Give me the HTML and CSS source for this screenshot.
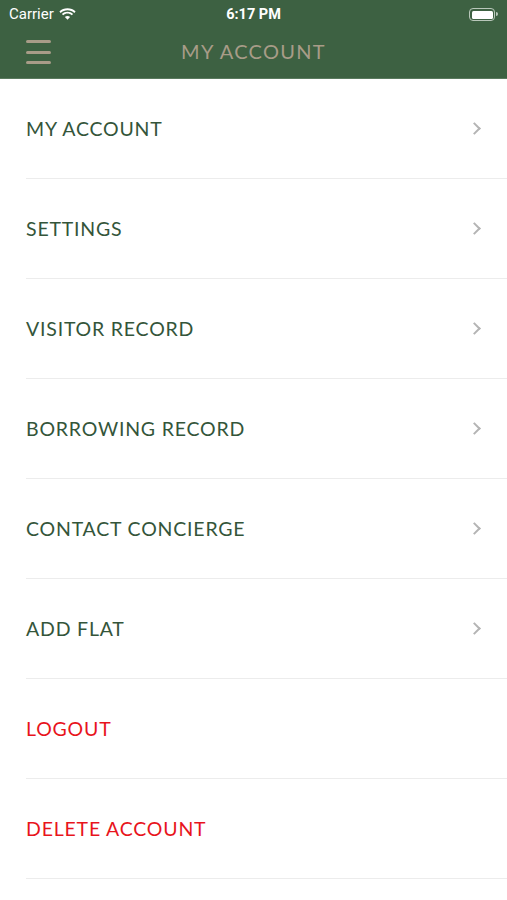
FILE: index.html
```html
<!DOCTYPE html>
<html lang="en">

<head>
    <meta charset="UTF-8">
    <meta name="viewport" content="width=device-width, initial-scale=1.0">
    <title>My Account</title>
    <link rel="stylesheet" href="styles.css">
</head>

<body>
    <header class="top">
        <div class="status">
            <div class="carrier">
                Carrier
                <svg class="wifi" width="17" height="12" viewBox="0 0 17 12">
                    <path d="M8.5 2.2c2.6 0 5 1 6.8 2.7l1.3-1.4C14.5 1.5 11.6.3 8.5.3S2.5 1.5.4 3.5l1.3 1.4C3.5 3.2 5.9 2.2 8.5 2.2z" fill="#fff" />
                    <path d="M8.5 5.6c1.6 0 3.1.6 4.3 1.7l1.3-1.4C12.6 4.5 10.6 3.7 8.5 3.7S4.4 4.5 2.9 5.9l1.3 1.4C5.4 6.2 6.9 5.6 8.5 5.6z" fill="#fff" />
                    <path d="M8.5 11.7l2.6-2.8C10.4 8.3 9.5 7.9 8.5 7.9S6.6 8.3 5.9 8.9z" fill="#fff" />
                </svg>
            </div>
            <div class="time">6:17 PM</div>
            <div class="battery">
                <span class="cell"></span>
                <span class="tip"></span>
            </div>
        </div>
        <div class="navbar">
            <button class="menu" aria-label="Menu">
                <span></span><span></span><span></span>
            </button>
            <h1>MY ACCOUNT</h1>
        </div>
    </header>

    <ul class="list">
        <li><span>MY ACCOUNT</span><i class="chev"></i></li>
        <li><span>SETTINGS</span><i class="chev"></i></li>
        <li><span>VISITOR RECORD</span><i class="chev"></i></li>
        <li><span>BORROWING RECORD</span><i class="chev"></i></li>
        <li><span>CONTACT CONCIERGE</span><i class="chev"></i></li>
        <li><span>ADD FLAT</span><i class="chev"></i></li>
        <li class="danger"><span>LOGOUT</span></li>
        <li class="danger"><span>DELETE ACCOUNT</span></li>
    </ul>
</body>

</html>
```

FILE: styles.css
```css
* {
    margin: 0;
    padding: 0;
    box-sizing: border-box;
}

body {
    font-family: "Lato", "Open Sans", sans-serif;
    background-color: #fff;
    width: 507px;
    height: 900px;
    overflow: hidden;
}

.top {
    background-color: #3d6142;
    height: 79px;
    border-bottom: 1px solid #5a7a5e;
}

.status {
    height: 28px;
    display: flex;
    align-items: center;
    justify-content: space-between;
    padding: 0 9px 0 9px;
    color: #fff;
    font-family: "Roboto", "Liberation Sans", sans-serif;
    font-size: 15px;
}

.carrier {
    display: flex;
    align-items: center;
    gap: 5px;
    width: 120px;
}

.time {
    font-weight: 700;
    font-size: 14.5px;
}

.battery {
    width: 120px;
    display: flex;
    justify-content: flex-end;
    align-items: center;
}

.battery .cell {
    width: 26px;
    height: 13px;
    border: 1.5px solid #b9c7ba;
    border-radius: 4px;
    padding: 1.5px;
    display: block;
    background-clip: content-box;
    background-color: #fff;
}

.battery .tip {
    width: 2px;
    height: 4px;
    background: #b9c7ba;
    border-radius: 0 2px 2px 0;
    margin-left: 1px;
}

.navbar {
    height: 50px;
    display: flex;
    align-items: center;
    justify-content: center;
    position: relative;
}

.menu {
    position: absolute;
    left: 26px;
    top: 11px;
    width: 25px;
    height: 26px;
    background: none;
    border: none;
    display: flex;
    flex-direction: column;
    justify-content: space-between;
    padding: 1px 0;
}

.menu span {
    display: block;
    height: 3px;
    border-radius: 2px;
    background-color: #a89c88;
}

.navbar h1 {
    font-weight: 400;
    font-size: 20px;
    color: #a89c88;
    letter-spacing: 1.3px;
    margin-top: -4px;
}

.list {
    list-style: none;
}

.list li {
    height: 100px;
    margin-left: 26px;
    border-bottom: 1px solid #ececec;
    display: flex;
    align-items: center;
    justify-content: space-between;
    padding-right: 26px;
    color: #34553a;
    font-size: 19.5px;
    letter-spacing: 0.8px;
}

.list li.danger {
    color: #e8141c;
}

.chev {
    width: 9px;
    height: 9px;
    border-top: 2px solid #b4b4b4;
    border-right: 2px solid #b4b4b4;
    transform: rotate(45deg);
    margin-right: 2px;
}
```
